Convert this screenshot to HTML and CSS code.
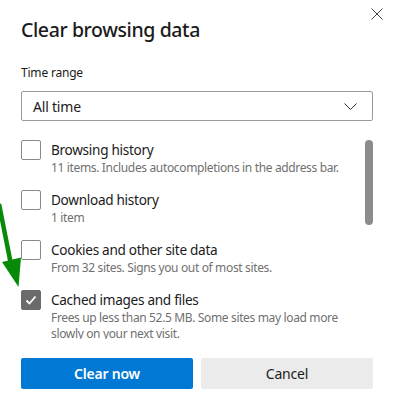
FILE: index.html
```html
<!DOCTYPE html>
<html lang="en">
<head>
<meta charset="utf-8">
<title>Clear browsing data</title>
<link rel="stylesheet" href="styles.css">
</head>
<body>
<div class="dialog">
  <header class="head">
    <h1 class="title">Clear browsing data</h1>
    <button class="close" aria-label="Close">
      <svg width="12" height="12" viewBox="0 0 12 12"><path d="M0.5 0.5 L11.5 11.5 M11.5 0.5 L0.5 11.5" stroke="#444" stroke-width="1" fill="none"/></svg>
    </button>
  </header>

  <div class="field-label">Time range</div>
  <div class="select">
    <span>All time</span>
    <svg class="chev" width="13" height="7" viewBox="0 0 13 7"><path d="M0.5 0.5 L6.5 6.5 L12.5 0.5" stroke="#333" stroke-width="1" fill="none"/></svg>
  </div>

  <div class="list">
    <div class="item">
      <span class="cb"></span>
      <div class="txt">
        <div class="name">Browsing history</div>
        <div class="desc">11 items. Includes autocompletions in the address bar.</div>
      </div>
    </div>
    <div class="item">
      <span class="cb"></span>
      <div class="txt">
        <div class="name">Download history</div>
        <div class="desc">1 item</div>
      </div>
    </div>
    <div class="item">
      <span class="cb"></span>
      <div class="txt">
        <div class="name">Cookies and other site data</div>
        <div class="desc">From 32 sites. Signs you out of most sites.</div>
      </div>
    </div>
    <div class="item">
      <span class="cb checked">
        <svg width="14" height="14" viewBox="0 0 14 14"><path d="M2.5 7.5 L5.5 10.5 L11.5 3.5" stroke="#fff" stroke-width="1.8" fill="none"/></svg>
      </span>
      <div class="txt">
        <div class="name">Cached images and files</div>
        <div class="desc">Frees up less than 52.5 MB. Some sites may load more slowly on your next visit.</div>
      </div>
    </div>
    <div class="scrollbar"></div>
  </div>

  <div class="actions">
    <button class="btn primary">Clear now</button>
    <button class="btn secondary">Cancel</button>
  </div>

  <svg class="arrow" width="26" height="90" viewBox="0 200 26 90">
    <line x1="-1" y1="204" x2="10.5" y2="262" stroke="#078a07" stroke-width="4.5"/>
    <polygon points="2,262 21,257.5 18.5,287" fill="#078a07"/>
  </svg>
</div>
</body>
</html>
```

FILE: styles.css
```css
* { box-sizing: border-box; }

html, body {
  margin: 0;
  padding: 0;
  background: #ffffff;
}

body {
  width: 394px;
  height: 406px;
  overflow: hidden;
  font-family: "Noto Sans", "Open Sans", sans-serif;
  color: #1b1b1b;
}

.dialog {
  position: relative;
  padding: 8px 21px 0 21px;
}

.head {
  display: flex;
  align-items: flex-start;
}

.title {
  flex: 1;
  margin: 8px 0 0 0;
  font-size: 19.5px;
  line-height: 28px;
  font-weight: 500;
  letter-spacing: -0.4px;
  color: #1b1b1b;
}

.close {
  width: 12px;
  height: 12px;
  padding: 0;
  margin: 0 -10px 0 0;
  border: 0;
  background: none;
  display: flex;
}

.field-label {
  margin-top: 21px;
  font-size: 12px;
  line-height: 16px;
  letter-spacing: -0.2px;
  color: #1b1b1b;
}

.select {
  margin-top: 10px;
  height: 30px;
  border: 1px solid #9a9a9a;
  border-radius: 2px;
  display: flex;
  align-items: center;
  justify-content: space-between;
  padding: 0 15px 0 11px;
  font-size: 14px;
  letter-spacing: -0.2px;
  color: #1b1b1b;
}

.chev { display: block; }

.list {
  position: relative;
  margin-top: 10px;
  height: 208px;
  overflow: hidden;
  padding-top: 9px;
}

.item {
  display: flex;
  align-items: flex-start;
  gap: 10px;
  margin-bottom: 14px;
}

.cb {
  flex: none;
  width: 20px;
  height: 20px;
  border: 1px solid #8a8a8a;
  border-radius: 2px;
  background: #fff;
  display: flex;
  align-items: center;
  justify-content: center;
}

.cb.checked {
  background: #6b6b6b;
  border-color: #6b6b6b;
}

.txt {
  flex: 1;
  margin-right: 18px;
}

.name {
  font-size: 13.6px;
  line-height: 20px;
  letter-spacing: -0.3px;
  color: #1b1b1b;
}

.desc {
  font-size: 12px;
  line-height: 16px;
  letter-spacing: -0.35px;
  color: #707070;
}

.scrollbar {
  position: absolute;
  right: 0;
  top: 9px;
  width: 8px;
  height: 85px;
  border-radius: 4px;
  background: #8c8c8c;
}

.actions {
  margin-top: 19px;
  display: flex;
  gap: 8px;
}

.btn {
  flex: 1;
  height: 31px;
  border: 0;
  border-radius: 2px;
  font-family: "Noto Sans", "Open Sans", sans-serif;
  font-size: 14px;
  letter-spacing: -0.2px;
  padding: 0;
}

.btn.primary {
  background: #0078d4;
  color: #ffffff;
  font-weight: 600;
}

.btn.secondary {
  background: #ebebeb;
  color: #1b1b1b;
  font-weight: 400;
}

.arrow {
  position: absolute;
  left: 0;
  top: 200px;
}
```
